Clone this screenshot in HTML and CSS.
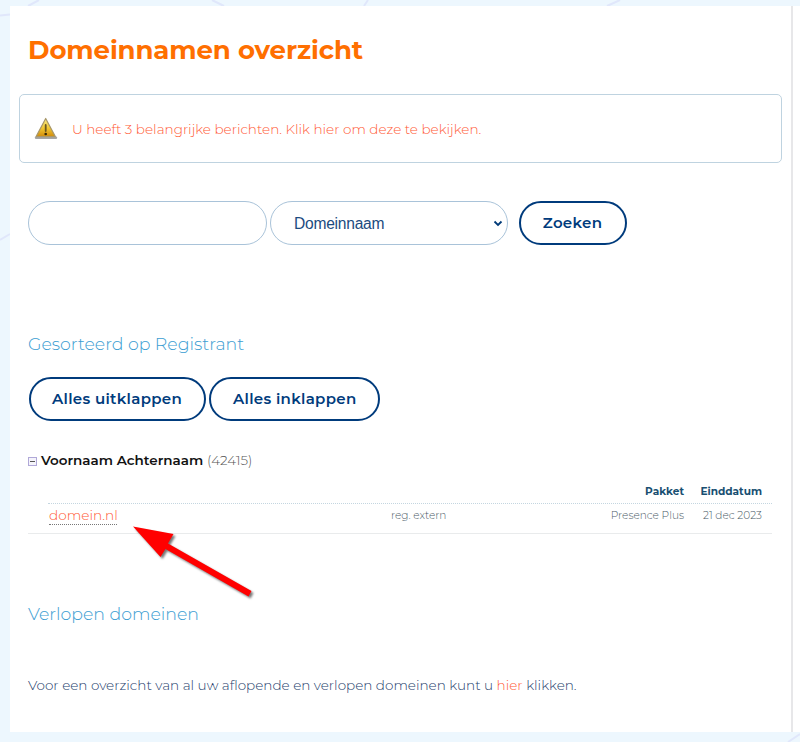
FILE: index.html
```html
<!DOCTYPE html>
<html lang="nl">
<head>
<meta charset="utf-8">
<title>Domeinnamen overzicht</title>
<link rel="stylesheet" href="styles.css">
</head>
<body>
<svg class="backdrop" width="800" height="742" viewBox="0 0 800 742" aria-hidden="true">
  <path d="M28 6 39 0M212 0 224 6M364 6 368 0M607 6 620 0M0 15.500 10 14.500M0 240 10 234M788 742 800 734"/>
</svg>
<main class="panel">
  <h1>Domeinnamen overzicht</h1>
  <div class="alert">
    <svg class="warning" width="24" height="24" viewBox="0 0 24 24" aria-hidden="true">
      <defs><linearGradient id="gold" x1="0" y1="0" x2="0" y2="1"><stop offset="0" stop-color="#f8ec8c"/><stop offset=".55" stop-color="#f0c52f"/><stop offset="1" stop-color="#d18b0b"/></linearGradient></defs>
      <path d="M2 20.800H22" stroke="#777" stroke-width="2.400" stroke-linecap="round" opacity=".65"/>
      <path d="M11.700 1.500 21.300 19.600H2.100Z" fill="url(#gold)" stroke="#a8976a" stroke-width="1.200" stroke-linejoin="round"/>
      <path d="M11.700 8V14" stroke="#6b5820" stroke-width="1.800" stroke-linecap="round"/>
      <circle cx="11.700" cy="17" r="1.300" fill="#352704"/>
    </svg>
    <a>U heeft 3 belangrijke berichten. Klik hier om deze te bekijken.</a>
  </div>
  <form class="search">
    <input class="field" type="text" aria-label="Zoekterm">
    <div class="field select"><span>Domeinnaam</span>
      <svg width="10" height="8" viewBox="0 0 10 8" aria-hidden="true"><path d="M1.500 2.500 5 6 8.500 2.500" fill="none" stroke="#003a78" stroke-width="1.800"/></svg>
    </div>
    <button class="btn find" type="button">Zoeken</button>
  </form>
  <h2>Gesorteerd op Registrant</h2>
  <div class="actions">
    <button class="btn expand" type="button">Alles uitklappen</button>
    <button class="btn collapse" type="button">Alles inklappen</button>
  </div>
  <div class="registrant">
    <svg width="9" height="9" viewBox="0 0 9 9" aria-hidden="true"><rect x=".5" y=".5" width="8" height="8" fill="#f5f4fb" stroke="#b0a8d8"/><path d="M2 4.500H7" stroke="#555"/></svg>
    <strong>Voornaam Achternaam</strong>
    <span class="count">(42415)</span>
  </div>
  <div class="domains">
    <div class="row head"><span></span><span></span><b>Pakket</b><b>Einddatum</b></div>
    <div class="row item"><span><a>domein.nl</a></span><span>reg. extern</span><span>Presence Plus</span><span>21 dec 2023</span></div>
    <svg class="arrow" width="130" height="84" viewBox="0 0 130 84" aria-hidden="true"><path d="M2 5.500 42.500 13 37 22.500 120.500 70 117.500 75.500 34.500 28 29.500 36Z"/></svg>
  </div>
  <h2 class="expired">Verlopen domeinen</h2>
  <p><span>Voor een overzicht van al uw aflopende en verlopen domeinen kunt u <a>hier</a> klikken.</span></p>
</main>
</body>
</html>
```
FILE: styles.css
```css
* { box-sizing: border-box; }
body {
  margin: 0;
  width: 800px;
  height: 742px;
  padding: 6px 0 10px 10px;
  overflow: hidden;
  background: #edf7fe;
  font-family: Montserrat, Inter, sans-serif;
  font-weight: 300;
  color: #25406c;
  white-space: nowrap;
}
.backdrop { position: absolute; top: 0; left: 0; z-index: -1; }
.backdrop path { fill: none; stroke: #e0e7fb; stroke-width: 2; }
.panel {
  height: 726px;
  padding: 0 18px;
  background: linear-gradient(to right, #fff 781px, #e7e7e9 781px 783px, #fff 783px);
}
h1, h2, p { margin: 0; display: flex; align-items: center; }
h1 { height: 88px; color: #ff6f00; font-size: 26px; font-weight: 700; letter-spacing: -.1px; }
.alert {
  display: flex;
  align-items: center;
  width: 763px;
  height: 69px;
  margin-left: -9px;
  padding-left: 14px;
  border: 1px solid #bfd3e0;
  border-radius: 5px;
  gap: 14px;
}
.alert a, p a { color: #ff5a35; }
.alert a { font-size: 13.55px; }
.search { display: flex; margin-top: 38px; height: 44px; }
.field {
  width: 238.5px;
  height: 44px;
  padding: 0 23px;
  border: 1px solid #a9c3d9;
  border-radius: 22px;
  background: #fff;
  margin-right: 3px;
}
.select {
  display: flex;
  align-items: center;
  justify-content: space-between;
  padding-right: 4px;
  margin-right: 10.5px;
  color: #1c4b80;
  font: 400 15.6px "Liberation Sans", sans-serif;
}
.select span { padding: 2px 0 0 .5px; letter-spacing: -.25px; }
.btn {
  height: 44px;
  padding: 0 0 2px;
  border: 2px solid #003b7c;
  border-radius: 22px;
  background: #fff;
  color: #003b7c;
  font-family: inherit;
  font-weight: 600;
  font-size: 15px;
  letter-spacing: .31px;
}
.find { width: 108px; }
.expand { width: 177px; }
.collapse { width: 171.500px; padding-left: 1px; }
h2 { height: 30px; margin-top: 84px; padding-bottom: 2px; color: #3b9dd2; font-size: 17.35px; font-weight: 300; }
.actions { display: flex; gap: 3px; margin-top: 18px; padding-left: .5px; }
.registrant { display: flex; align-items: center; height: 20px; margin-top: 29px; font-size: 13.5px; }
.registrant svg { margin: 3px 4px 0 0; }
.registrant strong { color: #111; font-weight: 600; margin-right: 4px; }
.registrant .count { color: #555; }
.domains { position: relative; width: 744px; height: 63px; margin-top: 1px; border-bottom: 1px solid #e9ebec; font-size: 10.55px; }
.row { display: grid; grid-template-columns: 342px 160px 1fr 78px; align-items: center; margin-left: 20px; padding: 0 10px 0 1px; }
.row > :nth-child(n+3) { justify-self: end; }
.head { height: 33px; padding-top: 8px; border-bottom: 1px dotted #c4d6e0; color: #194f72; }
.head b { font-weight: 700; }
.item { height: 22px; color: #4a5b67; }
.item a { display: block; width: 68px; height: 19px; line-height: 19px; border-bottom: 1px dotted #777; color: #ff5a35; font-size: 13.7px; }
.item > :first-child { padding-top: 1px; }
.arrow { position: absolute; left: 103px; top: 50px; fill: #f00; filter: drop-shadow(2px 2px 1px #0008); overflow: visible; }
.expired { margin-top: 65px; }
p { height: 24px; margin-top: 44px; font-size: 13.55px; }
```
